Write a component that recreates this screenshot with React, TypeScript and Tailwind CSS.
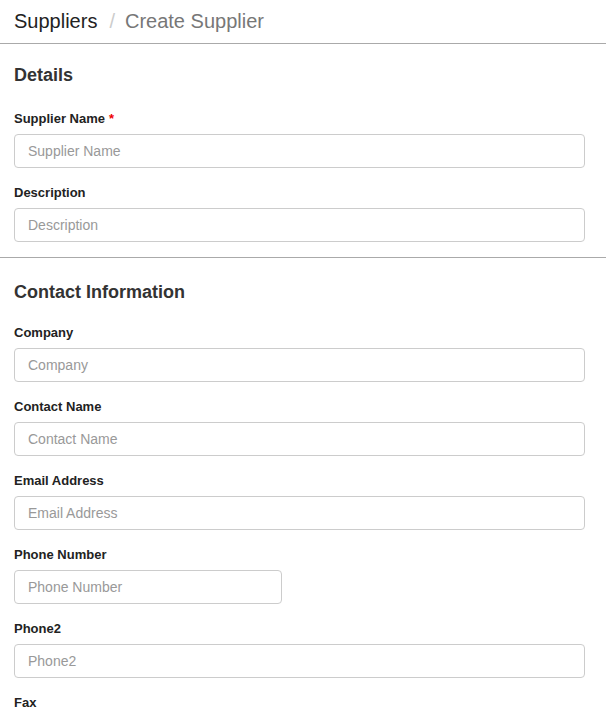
import React from "react";

type Field = { label: string; required?: boolean; narrow?: boolean };

const details: Field[] = [
  { label: "Supplier Name", required: true },
  { label: "Description" },
];

const contact: Field[] = [
  { label: "Company" },
  { label: "Contact Name" },
  { label: "Email Address" },
  { label: "Phone Number", narrow: true },
  { label: "Phone2" },
  { label: "Fax" },
];

function FormField({ field }: { field: Field }) {
  return (
    <div className="mb-4 last:mb-[15px]">
      <label className="mb-1.5 block text-[13px] leading-[18px] font-bold text-[#222]">
        {field.label}
        {field.required && <span className="ml-1 text-[#e00]">*</span>}
      </label>
      <input
        type="text"
        placeholder={field.label}
        className={`block h-[34px] rounded border border-[#ccc] bg-white px-[13px] text-[14px] text-[#333] outline-none placeholder:text-[#999] ${
          field.narrow ? "w-[268px]" : "w-full"
        }`}
      />
    </div>
  );
}

function Section({
  title,
  fields,
  className,
  headingClass,
}: {
  title: string;
  fields: Field[];
  className: string;
  headingClass: string;
}) {
  return (
    <section className={`pr-[21px] pl-[14px] ${className}`}>
      <h2 className={`text-[18px] leading-[20px] font-bold text-[#333] ${headingClass}`}>{title}</h2>
      {fields.map((f) => (
        <FormField key={f.label} field={f} />
      ))}
    </section>
  );
}

export default function App() {
  return (
    <main className="min-h-screen bg-white [font-family:'Liberation_Sans',Arial,sans-serif]">
      <header className="flex h-[44px] items-center border-b border-[#aaa] px-[14px] pb-[2px] text-[20px]">
        <span className="text-[#222]">Suppliers</span>
        <span className="mr-[10px] ml-[12px] text-[#ccc]">/</span>
        <span className="text-[#777]">Create Supplier</span>
      </header>
      <Section
        title="Details"
        fields={details}
        className="border-b border-[#aaa] pt-[21px]"
        headingClass="mb-[25px]"
      />
      <Section title="Contact Information" fields={contact} className="pt-[24px]" headingClass="mb-[22px]" />
    </main>
  );
}
